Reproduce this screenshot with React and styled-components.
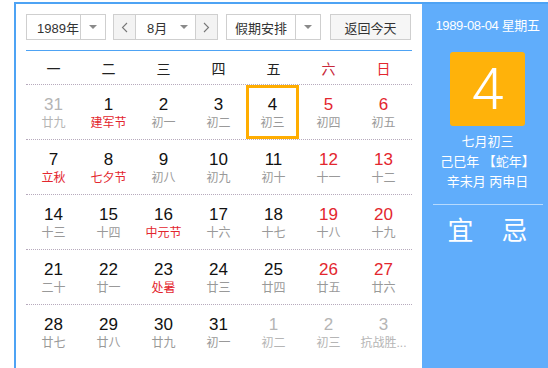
import React from "react";
import styled, { createGlobalStyle } from "styled-components";

const Global = createGlobalStyle`
  html, body { margin: 0; padding: 0; background: #fff; }
  body { font-family: "Liberation Sans", "Noto Sans CJK SC", sans-serif; }
`;

const BLUE = "#4ea3f4";

const Frame = styled.div`
  margin: 2px 0 0 14px;
  height: 366px;
  border-top: 2px solid ${BLUE};
  border-left: 2px solid ${BLUE};
  display: flex;
  box-sizing: border-box;
`;

const Left = styled.div`
  width: 406px;
  padding: 10px 10px 0;
  box-sizing: border-box;
  background: #fff;
`;

const Toolbar = styled.div`
  display: flex;
  height: 26px;
`;

const Select = styled.div`
  width: ${(p) => p.$w}px;
  margin-right: ${(p) => p.$mr || 0}px;
  border: 1px solid #cfcfcf;
  box-sizing: border-box;
  display: flex;
  background: #fff;
  font-size: 13px;
  color: #333;
`;

const SelectLabel = styled.div`
  flex: 1;
  display: flex;
  align-items: center;
  justify-content: ${(p) => (p.$center ? "center" : "flex-start")};
  padding-left: ${(p) => p.$pl || 0}px;
`;

const Arrow = styled.div`
  width: ${(p) => p.$w || 24}px;
  border-left: ${(p) => (p.$noline ? "none" : "1px solid #cfcfcf")};
  display: flex;
  align-items: center;
  justify-content: center;
  &::after {
    content: "";
    border-left: 4px solid transparent;
    border-right: 4px solid transparent;
    border-top: 4px solid #8a8a8a;
  }
`;

const MonthBox = styled.div`
  width: 105px;
  margin-right: 8px;
  border: 1px solid #cfcfcf;
  box-sizing: border-box;
  display: flex;
  font-size: 13px;
  color: #333;
`;

const NavBtn = styled.div`
  width: 21px;
  background: #f3f3f3;
  border-${(p) => (p.$side === "l" ? "right" : "left")}: 1px solid #cfcfcf;
  display: flex;
  align-items: center;
  justify-content: center;
`;

const MonthMid = styled.div`
  flex: 1;
  display: flex;
  align-items: center;
  padding-left: 11px;
`;

const TodayBtn = styled.div`
  width: 81px;
  border: 1px solid #cfcfcf;
  box-sizing: border-box;
  background: #f6f6f6;
  display: flex;
  align-items: center;
  justify-content: center;
  font-size: 13px;
  color: #333;
`;

const BlueLine = styled.div`
  margin-top: 10px;
  border-top: 1px solid ${BLUE};
`;

const Grid = styled.div`
  display: grid;
  grid-template-columns: repeat(7, 55px);
`;

const Head = styled(Grid)`
  height: 33px;
  align-items: center;
`;

const HeadCell = styled.div`
  text-align: center;
  font-size: 14px;
  color: ${(p) => p.$c || "#222"};
`;

const Row = styled(Grid)`
  border-top: 1px dotted #b7aabd;
  height: 55px;
  box-sizing: border-box;
`;

const Cell = styled.div`
  display: flex;
  flex-direction: column;
  align-items: center;
  padding-top: 10px;
  box-sizing: border-box;
  height: 54px;
  ${(p) =>
    p.$today &&
    `
    border: 3px solid #ffad00;
    width: 53px;
    padding-top: 7px;
  `}
`;

const Num = styled.div`
  font-size: 17px;
  line-height: 20px;
  color: ${(p) => p.$c};
`;

const Lunar = styled.div`
  font-size: 12px;
  line-height: 16px;
  color: ${(p) => p.$c};
  white-space: nowrap;
`;

const Right = styled.div`
  flex: 1;
  background: #60adfb;
  padding: 12px 0 0 5px;
  box-sizing: border-box;
  display: flex;
  flex-direction: column;
  align-items: center;
  color: #fff;
`;

const DateText = styled.div`
  font-size: 13px;
  line-height: 20px;
  white-space: nowrap;
  letter-spacing: -0.35px;
`;

const BigDay = styled.div`
  margin-top: 16px;
  width: 75px;
  height: 74px;
  border-radius: 3px;
  background: #ffb20a;
  display: flex;
  align-items: center;
  justify-content: center;
  font-family: "Roboto", "Liberation Sans", sans-serif;
  font-weight: 300;
  font-size: 58px;
  color: #fff;
`;

const InfoLines = styled.div`
  margin-top: 6px;
  font-size: 13px;
  line-height: 20px;
  text-align: center;
  white-space: nowrap;
`;

const Sep = styled.div`
  margin-top: 12px;
  width: 110px;
  border-top: 1px solid rgba(255, 255, 255, 0.55);
`;

const YiJi = styled.div`
  margin-top: 11px;
  display: flex;
  gap: 28px;
  font-size: 26px;
  line-height: 30px;
`;

const Chev = ({ dir }) => (
  <svg width="7" height="11" viewBox="0 0 7 11">
    <path
      d={dir === "l" ? "M6 1 L1.5 5.5 L6 10" : "M1 1 L5.5 5.5 L1 10"}
      fill="none"
      stroke="#777"
      strokeWidth="1.1"
    />
  </svg>
);

const RED = "#e3262e";
const GRAY_L = "#999";
const OTHER = "#b5b5b5";

const weeks = [
  [[31, "廿九", "o"], [1, "建军节", "h"], [2, "初一"], [3, "初二"], [4, "初三", "t"], [5, "初四", "w"], [6, "初五", "w"]],
  [[7, "立秋", "h"], [8, "七夕节", "h"], [9, "初八"], [10, "初九"], [11, "初十"], [12, "十一", "w"], [13, "十二", "w"]],
  [[14, "十三"], [15, "十四"], [16, "中元节", "h"], [17, "十六"], [18, "十七"], [19, "十八", "w"], [20, "十九", "w"]],
  [[21, "二十"], [22, "廿一"], [23, "处暑", "h"], [24, "廿三"], [25, "廿四"], [26, "廿五", "w"], [27, "廿六", "w"]],
  [[28, "廿七"], [29, "廿八"], [30, "廿九"], [31, "初一"], [1, "初二", "o"], [2, "初三", "o"], [3, "抗战胜...", "o"]],
];

const heads = [
  ["一"], ["二"], ["三"], ["四"], ["五"], ["六", "#c8283a"], ["日", RED],
];

export default function App() {
  return (
    <>
      <Global />
      <Frame>
        <Left>
          <Toolbar>
            <Select $w={80} $mr={7}>
              <SelectLabel $pl={10}>1989年</SelectLabel>
              <Arrow />
            </Select>
            <MonthBox>
              <NavBtn $side="l"><Chev dir="l" /></NavBtn>
              <MonthMid>8月</MonthMid>
              <Arrow $w={22} $noline />
              <NavBtn $side="r"><Chev dir="r" /></NavBtn>
            </MonthBox>
            <Select $w={95} $mr={9}>
              <SelectLabel $center>假期安排</SelectLabel>
              <Arrow />
            </Select>
            <TodayBtn>返回今天</TodayBtn>
          </Toolbar>
          <BlueLine />
          <Head>
            {heads.map(([t, c]) => (
              <HeadCell key={t} $c={c}>{t}</HeadCell>
            ))}
          </Head>
          {weeks.map((w, i) => (
            <Row key={i}>
              {w.map(([n, l, t], j) => {
                const other = t === "o";
                const weekend = j >= 5 && !other;
                const numC = other ? OTHER : weekend ? RED : "#111";
                const lunC = other ? OTHER : t === "h" ? RED : GRAY_L;
                return (
                  <Cell key={j} $today={t === "t"}>
                    <Num $c={numC}>{n}</Num>
                    <Lunar $c={lunC}>{l}</Lunar>
                  </Cell>
                );
              })}
            </Row>
          ))}
        </Left>
        <Right>
          <DateText>1989-08-04 星期五</DateText>
          <BigDay>4</BigDay>
          <InfoLines>
            <div>七月初三</div>
            <div>己巳年 【蛇年】</div>
            <div>辛未月 丙申日</div>
          </InfoLines>
          <Sep />
          <YiJi>
            <span>宜</span>
            <span>忌</span>
          </YiJi>
        </Right>
      </Frame>
    </>
  );
}
